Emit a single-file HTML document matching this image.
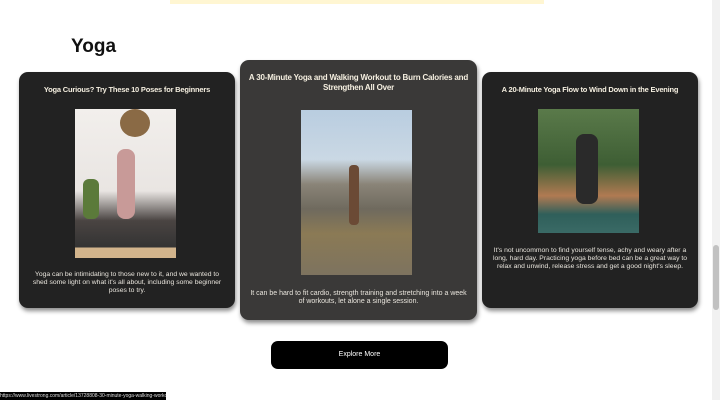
<!DOCTYPE html>
<html><head><style>
body{margin:0;width:720px;height:400px;background:#fff;position:relative;overflow:hidden;font-family:"Liberation Sans",sans-serif}
.banner{position:absolute;left:170px;top:0;width:374px;height:4px;background:#fff6d2}
h2{position:absolute;left:71px;top:36px;margin:0;font-size:19px;font-weight:bold;color:#111}
.card{position:absolute;background:#222;border-radius:9px;box-shadow:1px 3px 4px rgba(0,0,0,.45);color:#f5efe0;text-align:center}
.t{position:absolute;left:8px;right:8px;font-size:7.5px;font-weight:bold;line-height:10px;letter-spacing:-0.2px}
.d{position:absolute;left:8px;right:8px;font-size:6.8px;line-height:8px;color:#e8e4dc}
.img{position:absolute}
.btn{position:absolute;left:271px;top:341px;width:177px;height:28px;background:#000;border-radius:7px;color:#fff;font-size:7px;text-align:center;line-height:28px}
.sb{position:absolute;right:0;top:0;width:8px;height:400px;background:#f1f1f1}
.thumb{position:absolute;right:1px;top:245px;width:6px;height:65px;background:#c1c1c1;border-radius:3px}
.status{position:absolute;left:0;top:392px;width:166px;height:8px;background:#000;color:#ddd;font-size:5px;line-height:8px;white-space:nowrap;overflow:hidden}
</style></head><body>
<div class="banner"></div>
<h2>Yoga</h2>
<div class="card" style="left:19px;top:72px;width:216px;height:236px">
<div class="t" style="top:13px">Yoga Curious? Try These 10 Poses for Beginners</div>
<div class="img" style="left:56px;top:37px;width:101px;height:149px;background:linear-gradient(#f2efec 0,#e9e5e2 55%,#4a4442 75%,#333 93%,#d2b48c 93%)">
<div style="position:absolute;left:45px;top:0;width:30px;height:28px;border-radius:50%;background:#8a6a45"></div>
<div style="position:absolute;left:42px;top:40px;width:18px;height:70px;background:#c89a98;border-radius:8px"></div>
<div style="position:absolute;left:8px;top:70px;width:16px;height:40px;background:#5b7a3a;border-radius:6px"></div>
</div>
<div class="d" style="top:199px">Yoga can be intimidating to those new to it, and we wanted to shed some light on what it's all about, including some beginner poses to try.</div>
</div>
<div class="card" style="left:240px;top:60px;width:237px;height:260px;background:#3a3938">
<div class="t" style="top:13px;font-size:8px">A 30-Minute Yoga and Walking Workout to Burn Calories and Strengthen All Over</div>
<div class="img" style="left:61px;top:50px;width:111px;height:165px;background:linear-gradient(#b9cde0 0,#cad8e4 30%,#8a8478 45%,#6f6a5e 60%,#8b7a55 75%,#7d735f 100%)">
<div style="position:absolute;left:48px;top:55px;width:10px;height:60px;background:#6b4a35;border-radius:4px"></div>
</div>
<div class="d" style="top:230px;font-size:7px">It can be hard to fit cardio, strength training and stretching into a week of workouts, let alone a single session.</div>
</div>
<div class="card" style="left:482px;top:72px;width:216px;height:236px">
<div class="t" style="top:13px">A 20-Minute Yoga Flow to Wind Down in the Evening</div>
<div class="img" style="left:56px;top:37px;width:101px;height:124px;background:linear-gradient(#5a7a4a 0,#3e5e34 45%,#b07a52 70%,#2f5f5a 85%,#3a6a66 100%)">
<div style="position:absolute;left:38px;top:25px;width:22px;height:70px;background:#2a2a2a;border-radius:8px"></div>
</div>
<div class="d" style="top:175px">It's not uncommon to find yourself tense, achy and weary after a long, hard day. Practicing yoga before bed can be a great way to relax and unwind, release stress and get a good night's sleep.</div>
</div>
<div class="btn">Explore More</div>
<div class="sb"><div class="thumb"></div></div>
<div class="status">https://www.livestrong.com/article/13728808-30-minute-yoga-walking-workout/</div>
</body></html>
